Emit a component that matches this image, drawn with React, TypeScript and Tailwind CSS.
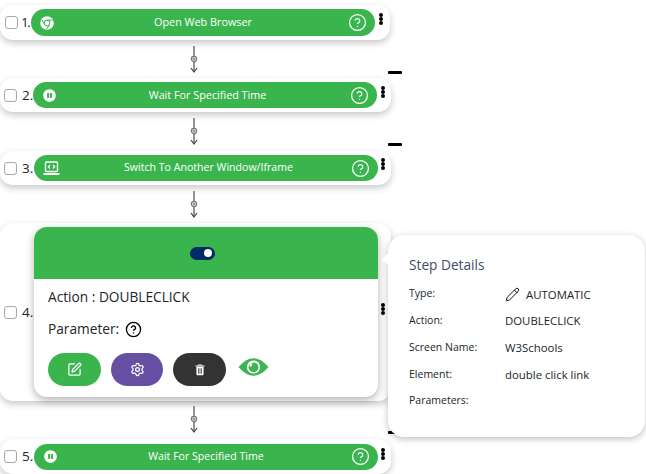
import React from "react";
import { CircleHelp, SquarePen, Settings, Pencil } from "lucide-react";
import { FaPauseCircle } from "react-icons/fa";

const Dots = () => (
  <div className="flex flex-col w-[4px]">
    <span className="w-[4px] h-[4px] rounded-full bg-black" />
    <span className="w-[4px] h-[4px] rounded-full bg-black" />
    <span className="w-[4px] h-[4px] rounded-full bg-black" />
  </div>
);

const Check = () => <span className="block w-[13px] h-[13px] shrink-0 rounded-[3px] border border-[#a8a8a8] bg-white" />;

const Connector = ({ className }: { className: string }) => (
  <svg width="12" height="27" viewBox="0 0 12 27" className={`block ml-[188px] ${className}`}>
    <line x1="6" y1="0" x2="6" y2="25" stroke="#666" strokeWidth="1.4" />
    <circle cx="6" cy="13" r="2.6" fill="#ddd" stroke="#777" strokeWidth="1.2" />
    <circle cx="6" cy="13" r="0.9" fill="#777" />
    <path d="M3 22 L6 26 L9 22" fill="none" stroke="#444" strokeWidth="1.2" />
  </svg>
);

const Chrome = () => (
  <svg width="14" height="14" viewBox="0 0 14 14" fill="none">
    <circle cx="7" cy="7" r="6.8" fill="#fff" />
    <circle cx="7" cy="7" r="2.9" stroke="#3ab54e" strokeWidth="1" />
    <path d="M7 4.1 H12.6 M4.5 8.5 L1.9 3.6 M9.5 8.5 L6.6 13.2" stroke="#3ab54e" strokeWidth="1" />
  </svg>
);

const Laptop = () => (
  <svg width="17" height="15" viewBox="0 0 17 15" fill="none" stroke="#fff">
    <rect x="2.5" y="1" width="12" height="9.5" rx="1" strokeWidth="1.4" />
    <path d="M0.5 13 H16.5" strokeWidth="2" />
    <path d="M7 4 L5.3 5.8 L7 7.5 M10 4 L11.7 5.8 L10 7.5" strokeWidth="1.1" />
  </svg>
);

const TrashIcon = () => (
  <svg width="10" height="12" viewBox="0 0 12 14" fill="none">
    <path d="M0.5 2.2 H11.5" stroke="#fff" strokeWidth="1.4" />
    <path d="M4 2 V0.8 H8 V2" stroke="#fff" strokeWidth="1" />
    <path d="M1.7 3 H10.3 V12.2 Q10.3 13.4 9 13.4 H3 Q1.7 13.4 1.7 12.2 Z" fill="#fff" />
    <path d="M4.6 5 V11.4 M7.4 5 V11.4" stroke="#333" strokeWidth="1.3" />
  </svg>
);

const Eye = () => (
  <svg width="31" height="20" viewBox="0 0 31 20">
    <path d="M0.5 10 Q15.5 -7.5 30.5 10 Q15.5 27.5 0.5 10 Z" fill="#3cb550" />
    <circle cx="15.5" cy="10" r="6.6" fill="#fff" />
    <circle cx="15.5" cy="10.3" r="4.9" fill="#3cb550" />
    <path d="M11.2 9.2 A4.4 4.4 0 0 1 15 5.6 A4.6 4.6 0 0 0 13.6 9.4 Z" fill="#fff" />
  </svg>
);

function Row({ n, title, icon, h, numCls, pillH, cardW, boxMl, dotMl, dotMt, iconL, textCls }: { n: string; title: string; icon: React.ReactNode; h: string; numCls: string; pillH: string; cardW: string; boxMl: string; dotMl: string; dotMt: string; iconL: string; textCls: string }) {
  return (
    <div className={`flex items-center rounded-[13px] bg-white shadow-[0_3px_7px_rgba(0,0,0,0.22)] ${h} ${cardW}`}>
      <div className={boxMl}><Check /></div>
      <span className={`text-[13.5px] whitespace-nowrap text-[#212529] ${numCls}`}>{n}</span>
      <div className={`relative flex items-center justify-center w-[344px] rounded-[15px] bg-[#3ab54e] text-white ${textCls} ${pillH}`}>
        <span className={`absolute flex items-center ${iconL}`}>{icon}</span>
        <span>{title}</span>
        <CircleHelp size={19} strokeWidth={1.6} className="absolute right-[8px]" />
      </div>
      <div className={`${dotMl} ${dotMt}`}><Dots /></div>
    </div>
  );
}

export default function App() {
  return (
    <div className="relative w-[646px] h-[474px] overflow-hidden bg-white pt-[5px] font-['Open_Sans',sans-serif]">
      <Row n="1." title="Open Web Browser" icon={<Chrome />} h="h-[35px]" numCls="ml-[3px] w-[10px] tracking-[-1.5px]" pillH="h-[27px]" cardW="w-[390px]" boxMl="ml-[5px]" dotMl="ml-[4px]" dotMt="-mt-[7px]" iconL="left-[9px]" textCls="text-[10.8px]" />
      <Connector className="mt-[6px] mb-[5px]" />
      <Row n="2." title="Wait For Specified Time" icon={<FaPauseCircle size={13} />} h="h-[34px]" numCls="ml-[5px] w-[11px]" pillH="h-[26px]" cardW="w-[391px]" boxMl="ml-[4px]" dotMl="ml-[4px]" dotMt="-mt-[6px]" iconL="left-[10px]" textCls="text-[10.8px] pl-[5px]" />
      <Connector className="mt-[6px] mb-[6px]" />
      <Row n="3." title="Switch To Another Window/Iframe" icon={<Laptop />} h="h-[34px]" numCls="ml-[5px] w-[12px]" pillH="h-[26px]" cardW="w-[391px]" boxMl="ml-[4px]" dotMl="ml-[3px]" dotMt="-mt-[8px]" iconL="left-[9px]" textCls="text-[10.6px] pl-[5px]" />
      <Connector className="mt-[6px] mb-[5px]" />

      <div className="flex items-center h-[178px] w-[391px] rounded-[13px] bg-white shadow-[0_3px_7px_rgba(0,0,0,0.22)]">
        <div className="ml-[4px]"><Check /></div>
        <span className="ml-[5px] w-[12px] text-[13.5px] whitespace-nowrap text-[#212529]">4.</span>
        <div className="w-[344px] h-[170px] rounded-[13px] bg-white shadow-[0_3px_9px_rgba(0,0,0,0.3)] flex flex-col overflow-hidden">
          <div className="h-[52px] shrink-0 bg-[#3ab54e] flex items-center justify-center pr-[7px]">
            <div className="w-[25px] h-[13px] rounded-full bg-[#002b66] flex items-center justify-end pr-[3px]">
              <span className="w-[8px] h-[8px] rounded-full bg-white" />
            </div>
          </div>
          <div className="pl-[14px] pt-[8px] text-[#212529]">
            <div className="text-[13.7px] leading-[20px]">Action : DOUBLECLICK</div>
            <div className="mt-[12px] flex items-center text-[13.7px] leading-[20px]">
              <span>Parameter:</span>
              <CircleHelp size={17} strokeWidth={1.9} className="ml-[6px] text-black" />
            </div>
            <div className="mt-[14px] flex items-center">
              <div className="w-[53px] h-[33px] rounded-full bg-[#3ab54e] flex items-center justify-center text-white"><SquarePen size={15} /></div>
              <div className="ml-[10px] w-[52px] h-[33px] rounded-full bg-[#6750a4] flex items-center justify-center text-white"><Settings size={15} /></div>
              <div className="ml-[10px] w-[53px] h-[33px] rounded-full bg-[#333333] flex items-center justify-center"><TrashIcon /></div>
              <div className="ml-[12px] -mt-[5px]"><Eye /></div>
            </div>
          </div>
        </div>
        <div className="ml-[3px] -mt-[6px]"><Dots /></div>
      </div>

      <Connector className="mt-[5px] mb-[6px]" />
      <Row n="5." title="Wait For Specified Time" icon={<FaPauseCircle size={13} />} h="h-[35px]" numCls="ml-[5px] w-[12px]" pillH="h-[26px]" cardW="w-[391px]" boxMl="ml-[4px]" dotMl="ml-[3px]" dotMt="-mt-[6px]" iconL="left-[10px]" textCls="text-[10.6px]" />

      <span className="absolute left-[388px] top-[71px] w-[14px] h-[3px] rounded-[1px] bg-black" />
      <span className="absolute left-[388px] top-[143px] w-[14px] h-[3px] rounded-[1px] bg-black" />
      <span className="absolute left-[388px] top-[431px] w-[14px] h-[3px] rounded-[1px] bg-black" />

      <div className="absolute left-[388px] top-[235px] w-[257px] h-[202px] rounded-[16px] bg-white shadow-[0_2px_7px_rgba(0,0,0,0.25)] pl-[21px] pt-[20px] text-[#212529]">
        <span className="absolute -left-[4px] top-[20px] w-[9px] h-[9px] rotate-45 bg-white" />
        <div className="text-[13.7px] leading-[19px] text-[#3f4d66]">Step Details</div>
        <div className="mt-[7px] grid grid-cols-[96px_1fr] auto-rows-[26.7px] items-center text-[10.5px]">
          <span>Type:</span>
          <span className="flex items-center text-[11.4px]"><Pencil size={15} strokeWidth={1.5} className="mr-[6px] text-black" />AUTOMATIC</span>
          <span>Action:</span>
          <span className="text-[11.4px]">DOUBLECLICK</span>
          <span>Screen Name:</span>
          <span className="text-[11.4px]">W3Schools</span>
          <span>Element:</span>
          <span className="text-[11.4px]">double click link</span>
          <span>Parameters:</span>
          <span />
        </div>
      </div>
    </div>
  );
}
